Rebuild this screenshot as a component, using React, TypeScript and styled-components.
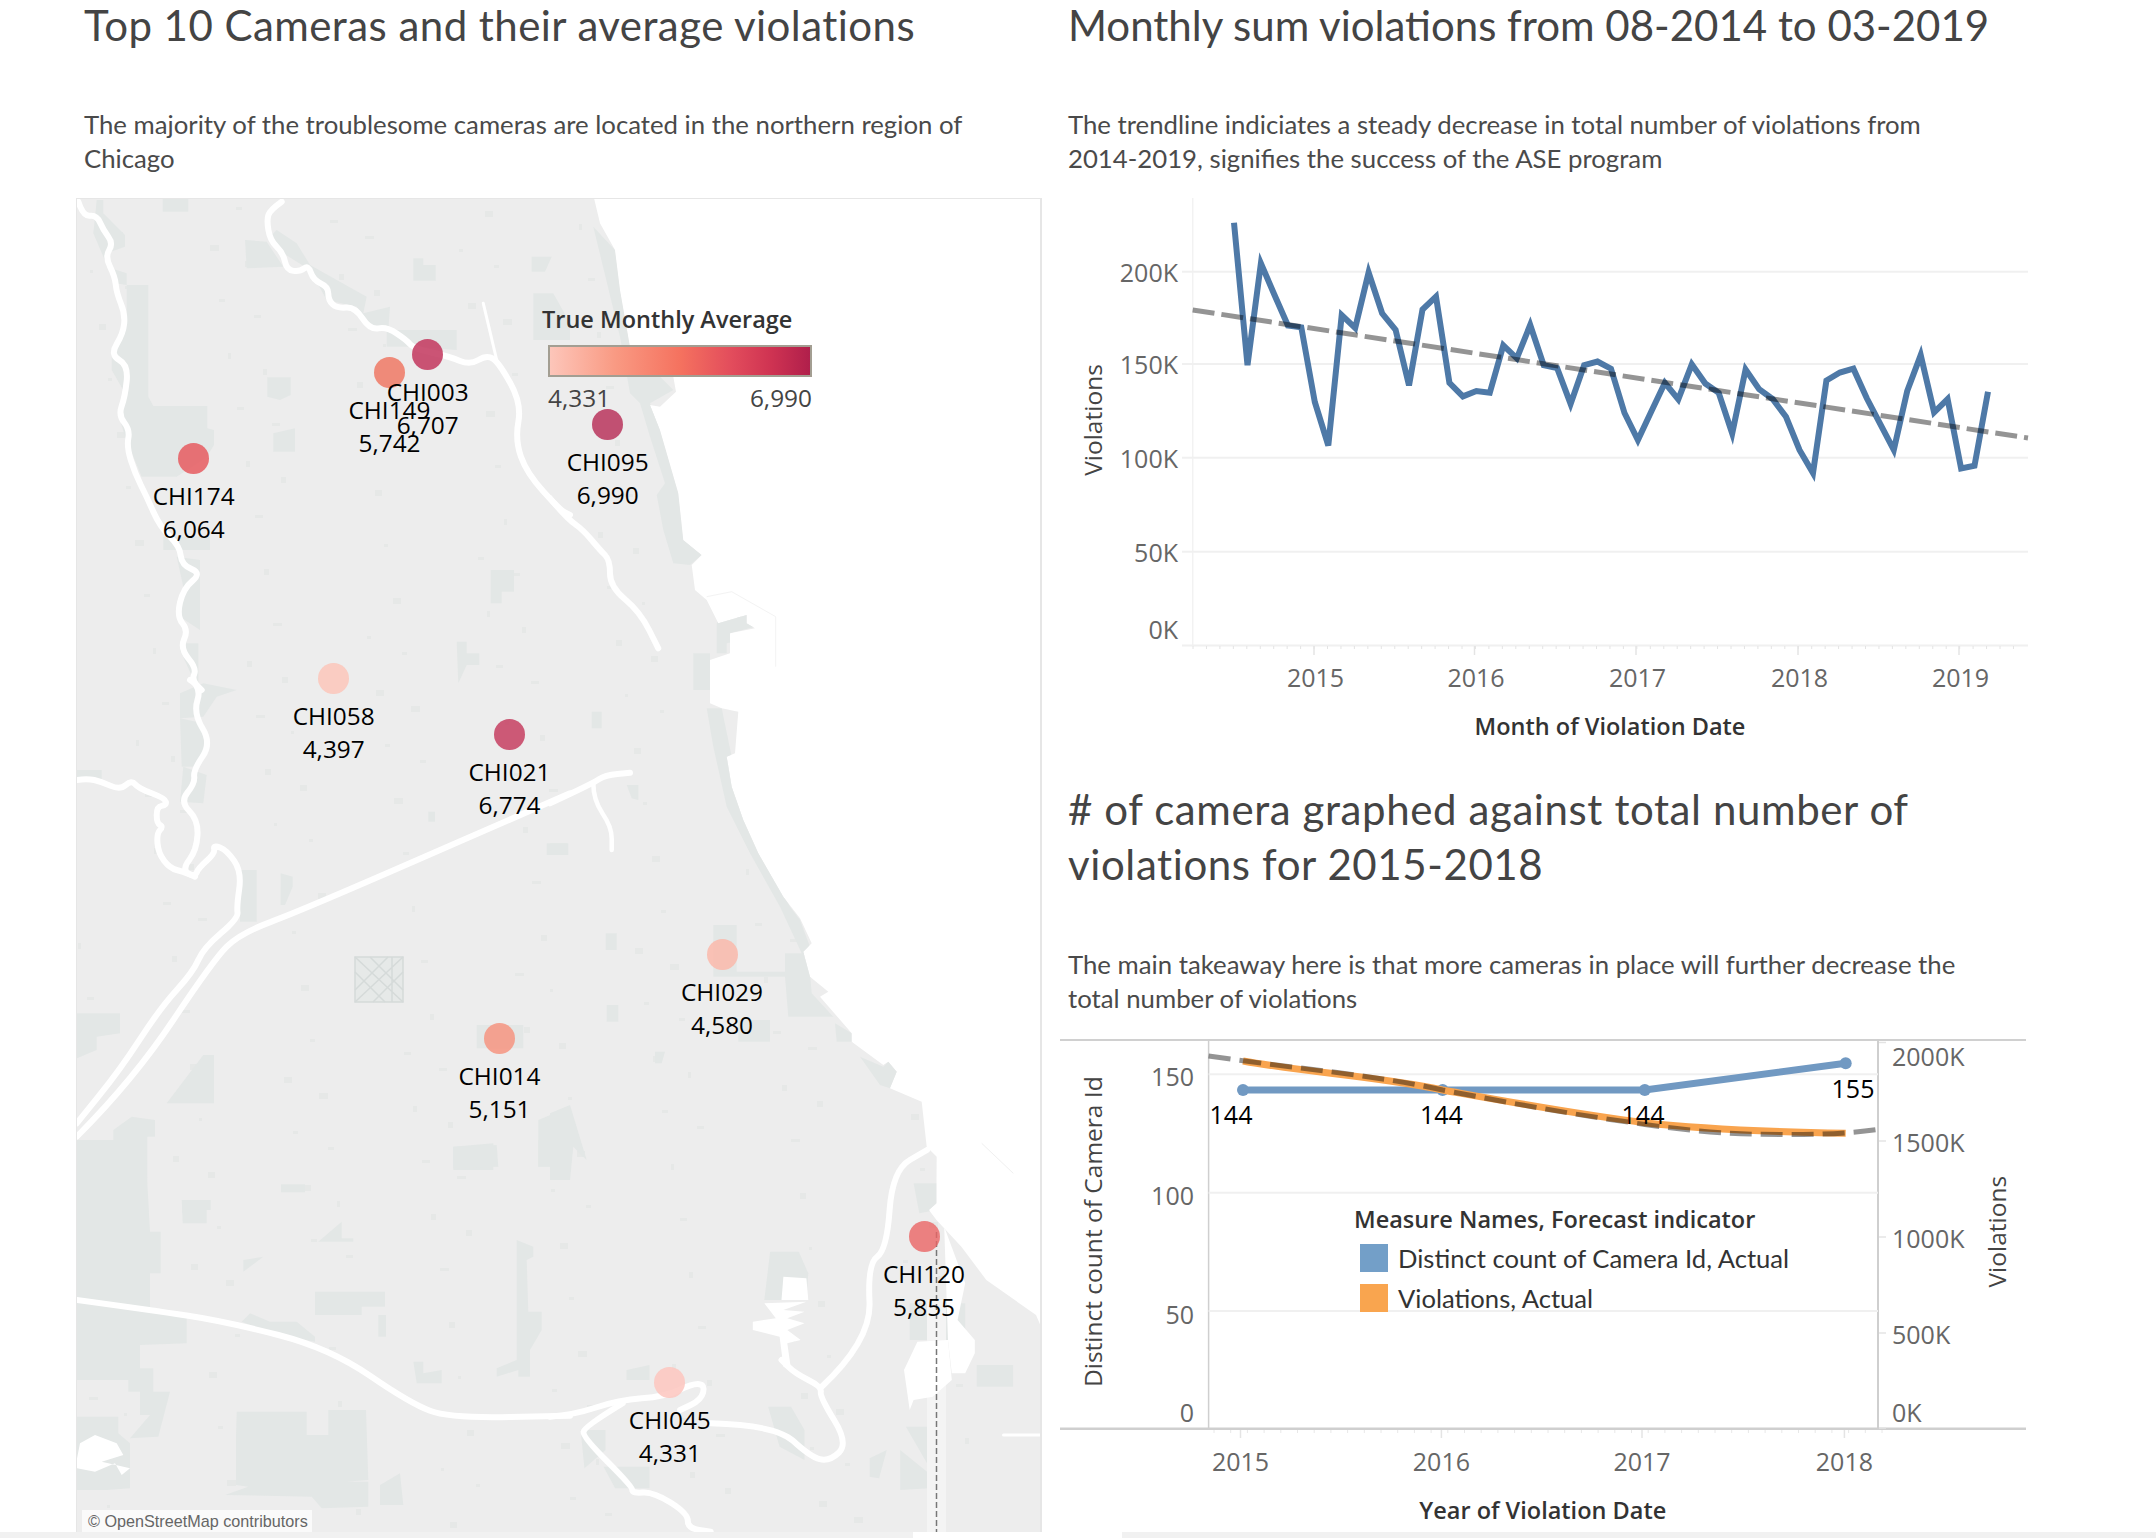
import styled, { createGlobalStyle } from 'styled-components';

const GlobalStyle = createGlobalStyle`
  html, body {
    margin: 0;
    padding: 0;
    background: #fff;
  }
`;

const Page = styled.div`
  width: 2156px;
  height: 1538px;
  overflow: hidden;
  font-family: 'Open Sans', 'Liberation Sans', sans-serif;
  display: flex;
  flex-direction: column;
`;

const Columns = styled.div`
  display: grid;
  grid-template-columns: 966px 980px;
  column-gap: 18px;
  padding-left: 76px;
  height: 1532px;
`;

const Column = styled.section`
  display: flex;
  flex-direction: column;
`;

const Title = styled.h1<{ $top?: number; $bottom?: number; $spacing?: number }>`
  margin: ${(p) => p.$top ?? -2}px 0 ${(p) => p.$bottom ?? 0}px;
  padding-left: 8px;
  font-family: Lato, 'Open Sans', sans-serif;
  font-weight: 400;
  font-size: 42px;
  line-height: 55px;
  letter-spacing: ${(p) => p.$spacing ?? 0}px;
  color: #444;
`;

const Description = styled.p`
  margin: 53.5px 0 23.5px;
  padding-left: 8px;
  font-family: Lato, 'Open Sans', sans-serif;
  font-weight: 400;
  font-size: 25.75px;
  line-height: 34px;
  color: #4a4a4a;
`;

const MapPanel = styled.div`
  position: relative;
  box-sizing: border-box;
  height: 1334px;
  border-top: 1px solid #e6e6e6;
  border-left: 1px solid #e6e6e6;
  border-right: 2px solid #e6e6e6;
  overflow: hidden;
`;

const MapSvg = styled.svg`
  display: block;
  width: 963px;
  height: 1333px;
`;

const PinDot = styled.span<{ $color: string }>`
  position: absolute;
  width: 31px;
  height: 31px;
  margin: -15.5px 0 0 -15.5px;
  border-radius: 50%;
  background: ${(p) => p.$color};
`;

const PinLabel = styled.div`
  position: absolute;
  width: 120px;
  margin-left: -60px;
  font-size: 24.4px;
  line-height: 33px;
  text-align: center;
  color: #000;
`;

const ScaleLegend = styled.div`
  position: absolute;
  left: 471px;
  top: 102.5px;
  width: 264px;
`;

const ScaleTitle = styled.div`
  margin-left: -6px;
  font-size: 23.5px;
  line-height: 34px;
  font-weight: 600;
  white-space: nowrap;
  color: #333;
`;

const ScaleBar = styled.div`
  box-sizing: border-box;
  height: 32px;
  margin-top: 9.5px;
  border: 2px solid #a39e92;
  background: linear-gradient(90deg, #fdc6ba 0%, #f99a83 25%, #f5725f 50%, #e24c5c 70%, #cf3352 85%, #b01f4b 100%);
`;

const ScaleRange = styled.div`
  display: flex;
  justify-content: space-between;
  margin-top: 3px;
  font-size: 24.4px;
  line-height: 35px;
  color: #444;
`;

const Attribution = styled.div`
  position: absolute;
  left: 5px;
  bottom: 0;
  width: 230px;
  height: 22px;
  box-sizing: border-box;
  padding-left: 6px;
  background: rgba(255, 255, 255, 0.7);
  font-family: 'Liberation Sans', Arial, sans-serif;
  font-size: 16.2px;
  line-height: 22px;
  white-space: nowrap;
  color: #666;
`;

const ChartBox = styled.div<{ $height: number }>`
  position: relative;
  height: ${(p) => p.$height}px;
`;

const ChartSvg = styled.svg`
  display: block;
  width: 980px;
  height: 100%;
`;

const AxisLabel = styled.text.attrs({ dy: -2, dominantBaseline: 'central' })<{ $dark?: boolean }>`
  font-family: 'Open Sans', sans-serif;
  font-size: 25px;
  fill: ${(p) => (p.$dark ? '#000' : '#666')};
`;

const AxisTitle = styled.text.attrs({ textAnchor: 'middle', dominantBaseline: 'central' })`
  font-family: 'Open Sans', sans-serif;
  font-size: 24.5px;
  fill: #444;
`;

const FieldTitle = styled.text.attrs({ textAnchor: 'middle', dominantBaseline: 'central' })`
  font-family: 'Open Sans', sans-serif;
  font-size: 23.5px;
  font-weight: 600;
  fill: #333;
`;

const SeriesLegend = styled.div`
  position: absolute;
  left: 294px;
  top: 163px;
  color: #333;
`;

const SeriesTitle = styled.div`
  font-size: 23.5px;
  line-height: 34px;
  font-weight: 600;
  white-space: nowrap;
`;

const SeriesRow = styled.div`
  display: flex;
  align-items: center;
  gap: 10px;
  margin: 8px 0 12px 6px;
  font-family: Lato, 'Open Sans', sans-serif;
  font-size: 25.6px;
  line-height: 28px;
  white-space: nowrap;
`;

const Swatch = styled.span<{ $color: string }>`
  width: 28px;
  height: 28px;
  background: ${(p) => p.$color};
`;

const BottomStrip = styled.div`
  display: grid;
  grid-template-columns: 913px 209px 1fr;
  height: 6px;
`;

const StripPart = styled.div<{ $blank?: boolean }>`
  background: ${(p) => (p.$blank ? '#fff' : '#f1f1f1')};
`;

type Tile = [number, number, number, number?];
const T5: Tile = [70, 190, 3];
const T6: Tile = [550, 190, 3];
const T7: Tile = [70, 680, 3];
const T8: Tile = [550, 680, 3];
const T9: Tile = [70, 1140, 3];
const T10: Tile = [550, 1140, 2.613, 3];

// shapes were traced off crops of the map, each tile has its own origin and scale
const toPage = ([ox, oy, sx, sy]: Tile, s: string) =>
  s.split(' ').map((p) => {
    const [x, y] = p.split(',').map(Number);
    return [+(ox + x / sx).toFixed(1), +(oy + y / (sy ?? sx)).toFixed(1)];
  });

const pts = (tile: Tile, s: string) => toPage(tile, s).map((p) => p.join(',')).join(' ');

// rounds the corners of a traced line
const smooth = (tile: Tile, s: string) => {
  const p = toPage(tile, s);
  let d = `M${p[0][0]} ${p[0][1]}`;
  for (let i = 1; i < p.length - 1; i++) {
    const mx = (p[i][0] + p[i + 1][0]) / 2;
    const my = (p[i][1] + p[i + 1][1]) / 2;
    d += ` Q${p[i][0]} ${p[i][1]} ${mx.toFixed(1)} ${my.toFixed(1)}`;
  }
  const last = p[p.length - 1];
  return `${d} L${last[0]} ${last[1]}`;
};

const coast = [
  '76,198 594,198',
  pts(T6, '150,100 195,180 210,300 240,470 300,550 370,560 378,605 330,650 300,645 330,720 385,910 400,1050 455,1095 425,1125 435,1200 470,1230 505,1300 590,1275 590,1300 615,1315 540,1330 540,1390 480,1410 480,1500'),
  pts(T8, '480,0 480,70 515,85 565,95 555,220 530,230 545,320 580,420 625,520 700,650 750,715 785,790 760,815 780,890 835,935 810,950 905,1060 905,1085 1000,1155 1015,1145 1040,1175 1020,1225 1115,1265 1130,1400 1160,1430 1160,1500'),
  pts(T10, '1010,40 1010,190 990,210 1010,240 1075,320 1140,420 1270,525 1283,560'),
  '1042,1532 76,1532',
].join(' ');

const parks: [Tile, string][] = [
  [T5, '170,285 235,285 235,620 250,648 412,648 412,715 432,720 432,765 410,800 320,860 215,860 165,740 145,670 165,610 125,540 125,495 165,430 170,370'],
  [T5, '80,30 100,30 100,70 165,135 165,170 110,190 110,230 170,250 170,285 135,280 100,200 70,130'],
  [T5, '525,150 590,155 640,230 530,235'],
  [T5, '620,120 680,160 720,225 890,320 880,370 960,350 955,420 1160,420 1160,480 1030,470 950,470 950,410 900,420 860,350 770,330 720,240 640,190 600,140'],
  [T5, '278,25 355,25 355,65 278,65'],
  [T5, '1030,205 1060,205 1060,225 1097,225 1097,272 1030,272'],
  [T5, '1385,200 1445,200 1425,245 1385,245'],
  [T5, '592,562 662,562 662,615 630,630 592,620'],
  [T5, '610,730 675,715 675,785 610,785'],
  [T5, '1262,1140 1332,1140 1332,1205 1295,1205 1295,1240 1262,1240'],
  [T5, '1160,1355 1190,1355 1190,1390 1228,1390 1228,1425 1190,1425 1165,1480'],
  [T5, '320,1100 390,1110 390,1320 330,1280 340,1190'],
  [T5, '280,1040 420,1040 420,1080 280,1080'],
  [T5, '1390,310 1450,310 1500,400 1500,450 1390,450'],
  [T5, '335,1360 385,1360 385,1500 330,1380'],
  [T6, '130,110 195,180 210,300 240,470 370,600 300,640 330,720 385,910 400,1050 455,1095 420,1125 370,1120 340,1020 320,915 345,880 300,740 270,640 240,610 210,440'],
  [T6, '430,1390 480,1390 480,1500 430,1500'],
  [T6, '530,1270 590,1270 590,1300 615,1310 540,1330 590,1350 530,1360 530,1390 500,1390 500,1300'],
  [T7, '330,40 400,10 500,30 440,50 400,110 330,115'],
  [T7, '330,115 400,130 420,190 375,260 335,260'],
  [T7, '340,260 410,285 400,370 330,365'],
  [T7, '20,270 95,270 95,300 20,300'],
  [T7, '510,570 560,570 560,725 510,725'],
  [T7, '632,580 668,590 668,620 645,675 632,675'],
  [T7, '20,1000 150,1000 150,1060 80,1070 80,1110 20,1135'],
  [T7, '290,1270 400,1125 432,1125 432,1270'],
  [T7, '20,1420 130,1420 130,1350 185,1310 255,1320 255,1370 232,1370 232,1500 20,1500'],
  [T7, '1220,1035 1360,1035 1360,1105 1220,1105'],
  [T7, '1405,1320 1500,1280 1500,1460 1405,1460'],
  [T7, '1150,1400 1270,1390 1270,1470 1150,1470'],
  [T7, '1075,395 1095,395 1095,425 1075,425'],
  [T7, '1430,490 1495,490 1495,525 1430,525'],
  [T8, '490,735 560,735 560,875 705,875 705,820 775,820 785,940 850,1010 715,1010 705,890 490,890'],
  [T8, '470,85 515,85 545,230 640,540 720,680 750,720 780,800 760,830 690,680 600,520 530,380 490,200'],
  [T8, '565,1020 660,1020 660,1085 565,1085'],
  [T8, '0,490 52,490 52,525 0,525'],
  [T8, '0,1300 60,1275 110,1440 70,1400 60,1500 0,1500'],
  [T8, '167,760 200,760 200,810 167,810'],
  [T8, '170,975 205,975 205,1025 170,1025'],
  [T8, '230,315 265,315 265,360 245,355'],
  [T8, '125,95 155,95 155,145 125,145'],
  [T8, '315,1115 345,1115 335,1150 315,1150'],
  [T8, '855,1030 905,1060 905,1085 860,1085'],
  [T8, '930,1130 1000,1160 1020,1140 1045,1175 1020,1225 990,1215'],
  [T9, '20,0 225,0 240,275 272,275 272,400 240,400 240,500 350,530 350,610 210,615 210,685 250,685 250,755 300,755 265,890 180,895 240,825 210,825 210,755 175,755 175,720 20,720'],
  [T9, '20,830 145,830 145,880 180,910 180,1045 110,1050 20,1050'],
  [T9, '335,180 422,180 422,210 410,210 410,250 338,250'],
  [T9, '500,815 710,815 710,885 775,885 775,810 888,810 895,1020 830,1025 895,1025 895,1100 755,1105 725,1070 465,1065 535,1040 498,1035 498,890'],
  [T9, '735,455 945,455 945,500 875,500 875,525 735,525'],
  [T9, '515,545 540,520 600,545 680,545 735,590 735,605 620,585'],
  [T9, '745,305 815,245 815,295 850,295 850,305'],
  [T9, '1340,300 1390,320 1390,350 1370,360 1375,515 1415,515 1415,570 1380,630 1380,710 1345,710 1345,690 1280,710 1280,685 1340,660'],
  [T9, '1150,20 1280,15 1285,80 1150,85'],
  [T9, '930,1035 990,1000 1000,1095 930,1095'],
  [T9, '520,360 580,350 520,395'],
  [T9, '1030,665 1060,665 1060,700 1115,690 1115,730 1040,730'],
  [T9, '633,133 705,133 705,157 633,157'],
  [T9, '925,525 948,525 948,590 925,590'],
  [T9, '1405,0 1500,0 1500,60 1440,60 1440,80 1405,80'],
  [T10, '575,335 650,335 675,400 670,480 560,480'],
  [T10, '950,130 1010,130 1010,210 965,220'],
  [T10, '570,800 630,800 665,870 665,960 600,920'],
  [T10, '200,690 260,675 260,720 200,720'],
  [T10, '80,870 145,870 145,930 90,985'],
  [T10, '140,980 260,980 260,1045 170,1045'],
  [T10, '915,930 990,1000 990,1045 915,1050'],
  [T10, '930,860 985,860 985,970'],
  [T10, '1115,675 1210,675 1210,740 1115,740'],
  [T10, '835,955 880,930 860,1015 835,1010'],
  [T10, '940,490 1085,490 1085,600 940,600'],
];

const lakes: [Tile, string][] = [
  [T10, '610,410 670,415 675,480 605,480'],
  [T10, '560,490 670,485 610,510 665,515 620,535 665,550 620,570 655,600 620,610 630,690 610,680 600,590 530,570 530,545 590,535'],
  [T10, '960,605 1040,600 1050,720 1000,770 950,780 940,810 925,690'],
  [T10, '1030,260 1085,430 1065,540 1110,600 1110,640 1085,700 1050,700 1040,600'],
  [T9, '20,960 30,910 75,885 140,910 160,945 95,965 180,985 155,1005 135,970 75,995 20,985'],
];

const rivers: [Tile, string, number][] = [
  [T5, '25,35 40,80 80,75 100,120 130,160 105,200 135,260 140,310 165,370 160,430 120,495 175,525 165,620 145,675 180,720 170,770 195,850 230,920 270,1010 330,1070 335,1125 395,1150 340,1195 320,1280 355,1320 330,1375 380,1435 365,1470 395,1500', 6],
  [T7, '360,0 395,20 370,100 425,190 370,270 375,310 330,365 385,420 380,510 335,570 375,590', 6],
  [T7, '20,300 50,295 95,305 150,330 185,300 205,325 285,355 290,375 260,380 260,430 280,440 260,460 265,520 300,565 340,575 375,590 385,565 435,520 430,495 470,510 515,575 500,680 505,715 400,805 370,875 270,985 150,1170 20,1330', 6],
  [T7, '20,1370 190,1200 430,840 510,760 700,690 1500,340', 6],
  [T8, '0,370 130,310 165,285 240,278', 6],
  [T8, '130,310 130,360 185,440 185,510', 4.5],
  [T5, '635,35 600,60 590,90 600,150 640,190 650,240 690,245 715,225 730,270 775,290 775,330 800,355 855,350 900,420 950,410 1010,450 1030,475 1140,500 1200,525 1250,495 1285,515 1355,640 1335,750 1370,850 1470,960 1500,975', 6],
  [T6, '0,925 50,985 100,1020 150,1080 180,1110 180,1190 270,1265 325,1375', 6],
  [T5, '1240,340 1280,510', 3],
  [T9, '20,480 240,510 470,545 780,625 1020,790 1140,835 1500,827', 6],
  [T10, '0,830 60,825 180,780 300,770 375,730 405,735 395,780 340,810', 6],
  [T10, '190,790 90,860 85,890 215,1040 215,1060 270,1055 360,1120 360,1165 420,1175', 6],
  [T10, '420,850 590,855 680,950 730,965 780,910 705,770 710,740 640,700 605,660', 6],
  [T10, '710,740 840,600 830,370 880,330 895,90 985,30', 6],
  [T10, '1185,885 1283,885', 3],
];

const specks = Array.from({ length: 320 }, (_, i) => {
  const a = (i * 7919 + 13) % 961;
  const b = (i * 104729 + 71) % 1327;
  return { x: 77 + a, y: 199 + b, w: 3 + (i % 7), h: 3 + ((i * 3) % 6) };
});

const pins = [
  { id: 'CHI149', value: '5,742', x: 389.5, y: 372.4, color: 'rgba(238,120,100,0.85)' },
  { id: 'CHI003', value: '6,707', x: 427.7, y: 354.4, color: 'rgba(196,60,98,0.88)' },
  { id: 'CHI095', value: '6,990', x: 607.7, y: 424.7, color: 'rgba(184,52,92,0.85)' },
  { id: 'CHI174', value: '6,064', x: 193.7, y: 458.4, color: 'rgba(230,90,95,0.85)' },
  { id: 'CHI058', value: '4,397', x: 333.7, y: 678.4, color: 'rgba(252,198,186,0.85)' },
  { id: 'CHI021', value: '6,774', x: 509.5, y: 734.4, color: 'rgba(198,62,96,0.85)' },
  { id: 'CHI029', value: '4,580', x: 722, y: 954.7, color: 'rgba(250,184,170,0.85)' },
  { id: 'CHI014', value: '5,151', x: 499.5, y: 1038.4, color: 'rgba(246,148,128,0.85)' },
  { id: 'CHI120', value: '5,855', x: 924, y: 1236.4, color: 'rgba(234,100,100,0.8)' },
  { id: 'CHI045', value: '4,331', x: 669.8, y: 1382.4, color: 'rgba(253,198,190,0.85)' },
];

const monthly = [
  226.3, 150, 204.5, 187.7, 171.3, 170.3, 130.3, 107, 176.8, 169.9, 199.6, 177.8, 168.9, 139.2,
  179.8, 186.7, 140.6, 133.3, 136.2, 135.2, 160.6, 153.7, 171.5, 150, 148.5, 129.3, 150, 152,
  148.1, 124.4, 109.9, 125.3, 140.6, 131.7, 150.5, 140.2, 135.2, 113.5, 147.7, 137.2, 131.9, 122.4,
  104.6, 92.3, 141.8, 146.1, 148.1, 132.3, 118.4, 104.6, 136.2, 155.4, 124.8, 131.9, 94.7, 96.2, 135.8,
];
const monthX = (i: number) => 1234 + (i * 754) / (monthly.length - 1);
const monthY = (v: number) => 645.4 - v * 1.868;

const grid1 = [
  { label: '200K', y: 271.7, ty: 274 },
  { label: '150K', y: 363.9, ty: 366 },
  { label: '100K', y: 457.8, ty: 460 },
  { label: '50K', y: 551.8, ty: 554 },
  { label: '0K', y: 645.4, ty: 630.5 },
];
const years1 = [
  { label: '2015', x: 1314 },
  { label: '2016', x: 1474.5 },
  { label: '2017', x: 1636 },
  { label: '2018', x: 1798 },
  { label: '2019', x: 1959 },
];

const grid2 = [
  { label: '150', y: 1073.3, ty: 1077 },
  { label: '100', y: 1191.7, ty: 1196 },
  { label: '50', y: 1310, ty: 1314.7 },
];
const right2 = [
  { label: '2000K', y: 1041.5, ty: 1057 },
  { label: '1500K', y: 1140, ty: 1142.7 },
  { label: '1000K', y: 1236, ty: 1239 },
  { label: '500K', y: 1332, ty: 1335 },
  { label: '0K', y: 1427, ty: 1412.7 },
];
const years2 = [
  { label: '2015', x: 1240.5 },
  { label: '2016', x: 1441.4 },
  { label: '2017', x: 1642 },
  { label: '2018', x: 1844.4 },
];
const bluePts = [
  [1243, 1089],
  [1442.6, 1089],
  [1644.8, 1089],
  [1845.7, 1062.3],
];
const dataLabels = [
  { label: '144', x: 1231, y: 1115.3 },
  { label: '144', x: 1441.4, y: 1115.3 },
  { label: '144', x: 1643, y: 1115.3 },
  { label: '155', x: 1853, y: 1089.3 },
];

const MapView = () => (
  <MapPanel>
    <MapSvg viewBox="77 199 963 1333">
      <defs>
        <clipPath id="land">
          <polygon points={coast} />
        </clipPath>
      </defs>
      <polygon points={coast} fill="#ededed" />
      <g clipPath="url(#land)">
        {specks.map((s, i) => (
          <rect key={i} x={s.x} y={s.y} width={s.w} height={s.h} fill="#e6e8e7" />
        ))}
        {parks.map(([tile, s], i) => (
          <polygon key={i} points={pts(tile, s)} fill="#e3e7e6" />
        ))}
        <rect x="927" y="1300" width="19" height="232" fill="#f4f4f4" />
        {lakes.map(([tile, s], i) => (
          <polygon key={i} points={pts(tile, s)} fill="#fff" />
        ))}
      </g>
      <g stroke="#d5dad9" strokeWidth="1.5" fill="#e6e9e8">
        <rect x="355" y="957" width="48" height="45" />
        <path d="M355 957 L403 1002 M403 957 L355 1002 M370 957 L403 990 M388 957 L355 990 M355 972 L385 1002 M403 972 L373 1002 M392 957 V1002" fill="none" />
      </g>
      <polyline points={pts(T6, '470,1220 545,1205 677,1280 677,1430')} fill="none" stroke="#f3f3f3" strokeWidth="1" />
      <polyline points={pts(T8, '1295,1390 1390,1480')} fill="none" stroke="#f0f0f0" strokeWidth="1" />
      {rivers.map(([tile, s, w], i) => (
        <path
          key={i}
          d={smooth(tile, s)}
          fill="none"
          stroke="#fff"
          strokeWidth={w}
          strokeLinejoin="round"
          strokeLinecap="round"
        />
      ))}
      <line x1="936.5" y1="1232" x2="936.5" y2="1532" stroke="#777" strokeWidth="1.5" strokeDasharray="6 3" />
    </MapSvg>
    {pins.map((p) => (
      <PinDot key={p.id} $color={p.color} style={{ left: p.x - 77, top: p.y - 199 }} />
    ))}
    {pins.map((p) => (
      <PinLabel key={p.id} style={{ left: p.x - 77, top: p.y - 199 + 20.5 }}>
        {p.id}
        <br />
        {p.value}
      </PinLabel>
    ))}
    <ScaleLegend>
      <ScaleTitle>True Monthly Average</ScaleTitle>
      <ScaleBar />
      <ScaleRange>
        <span>4,331</span>
        <span>6,990</span>
      </ScaleRange>
    </ScaleLegend>
    <Attribution>© OpenStreetMap contributors</Attribution>
  </MapPanel>
);

const MonthlyChart = () => (
  <ChartBox $height={562}>
    <ChartSvg viewBox="1060 198 980 562">
      <line x1="1192.7" y1="198" x2="1192.7" y2="645" stroke="#f2f2f2" strokeWidth="1.5" />
      {grid1.map((g) => (
        <g key={g.label}>
          <line x1="1182" y1={g.y} x2="2028" y2={g.y} stroke="#f0f0f0" strokeWidth="2" />
          <AxisLabel x="1178" y={g.ty} textAnchor="end">
            {g.label}
          </AxisLabel>
        </g>
      ))}
      {Array.from({ length: 62 }, (_, i) => (
        <line key={i} x1={1193 + i * 13.45} y1="646" x2={1193 + i * 13.45} y2="649" stroke="#e4e4e4" strokeWidth="1" />
      ))}
      {years1.map((y) => (
        <g key={y.label}>
          <line x1={y.x} y1="646" x2={y.x} y2="655" stroke="#e4e4e4" strokeWidth="1.5" />
          <AxisLabel x={y.x + 1.5} y="679" textAnchor="middle">
            {y.label}
          </AxisLabel>
        </g>
      ))}
      <polyline
        points={monthly.map((v, i) => `${monthX(i).toFixed(1)},${monthY(v).toFixed(1)}`).join(' ')}
        fill="none"
        stroke="#4e79a7"
        strokeWidth="6"
        strokeLinejoin="miter"
      />
      <line x1="1192.7" y1="310" x2="2028" y2="438" stroke="#000" strokeOpacity="0.42" strokeWidth="5" strokeDasharray="22 7" />
      <AxisTitle transform="translate(1092 420) rotate(-90)">Violations</AxisTitle>
      <FieldTitle x="1610" y="725.7">
        Month of Violation Date
      </FieldTitle>
    </ChartSvg>
  </ChartBox>
);

const YearlyChart = () => (
  <ChartBox $height={494}>
    <ChartSvg viewBox="1060 1038 980 494">
      <line x1="1060" y1="1039" x2="2026" y2="1039" stroke="#d0d0d0" strokeWidth="2" />
      <line x1="1060" y1="1427.7" x2="2026" y2="1427.7" stroke="#cfcfcf" strokeWidth="2.5" />
      <line x1="1208.6" y1="1038" x2="1208.6" y2="1427" stroke="#cfcfcf" strokeWidth="1.5" />
      <line x1="1878" y1="1038" x2="1878" y2="1427" stroke="#cfcfcf" strokeWidth="2" />
      {grid2.map((g) => (
        <g key={g.label}>
          <line x1="1208.6" y1={g.y} x2="1878" y2={g.y} stroke="#f0f0f0" strokeWidth="2" />
          <AxisLabel x="1194" y={g.ty} textAnchor="end">
            {g.label}
          </AxisLabel>
        </g>
      ))}
      <AxisLabel x="1194" y="1412.7" textAnchor="end">
        0
      </AxisLabel>
      {right2.map((g) => (
        <g key={g.label}>
          <line x1="1879" y1={g.y} x2="1886" y2={g.y} stroke="#e4e4e4" strokeWidth="1.5" />
          <AxisLabel x="1892" y={g.ty}>
            {g.label}
          </AxisLabel>
        </g>
      ))}
      {Array.from({ length: 41 }, (_, i) => (
        <line key={i} x1={1214 + i * 16.7} y1="1429" x2={1214 + i * 16.7} y2="1432" stroke="#e8e8e8" strokeWidth="1" />
      ))}
      {years2.map((y) => (
        <g key={y.label}>
          <line x1={y.x} y1="1429" x2={y.x} y2="1437" stroke="#e4e4e4" strokeWidth="1.5" />
          <AxisLabel x={y.x} y="1461.5" textAnchor="middle">
            {y.label}
          </AxisLabel>
        </g>
      ))}
      <polyline points={bluePts.map((p) => p.join(',')).join(' ')} fill="none" stroke="#7199c2" strokeWidth="7" />
      {bluePts.map((p) => (
        <circle key={p[0]} cx={p[0]} cy={p[1]} r="6" fill="#7199c2" />
      ))}
      <path
        d="M1243 1060 C1310 1072 1375 1075 1442.6 1089 C1510 1101 1575 1113 1644.8 1121.7 C1710 1129 1780 1131 1845.7 1132.3"
        fill="none"
        stroke="#f9a44e"
        strokeWidth="7"
      />
      <path
        d="M1208.6 1055 C1290 1067 1370 1073 1442.6 1089 C1510 1102 1575 1114 1644.8 1123.4 C1690 1130 1730 1133 1761.5 1133.3 C1800 1133.8 1840 1134 1878 1128.4"
        fill="none"
        stroke="#000"
        strokeOpacity="0.42"
        strokeWidth="5"
        strokeDasharray="22 9"
      />
      {dataLabels.map((d) => (
        <AxisLabel key={d.x} $dark x={d.x} y={d.y} textAnchor="middle">
          {d.label}
        </AxisLabel>
      ))}
      <AxisTitle transform="translate(1092 1230.7) rotate(-90)">Distinct count of Camera Id</AxisTitle>
      <AxisTitle transform="translate(1996 1230.7) rotate(-90)">Violations</AxisTitle>
      <FieldTitle x="1542.8" y="1509">
        Year of Violation Date
      </FieldTitle>
    </ChartSvg>
    <SeriesLegend>
      <SeriesTitle>Measure Names, Forecast indicator</SeriesTitle>
      <SeriesRow>
        <Swatch $color="#739fc8" />
        Distinct count of Camera Id, Actual
      </SeriesRow>
      <SeriesRow>
        <Swatch $color="#f9a54f" />
        Violations, Actual
      </SeriesRow>
    </SeriesLegend>
  </ChartBox>
);

export default function App() {
  return (
    <Page>
      <GlobalStyle />
      <Columns>
        <Column>
          <Title $spacing={0.45}>Top 10 Cameras and their average violations</Title>
          <Description>
            The majority of the troublesome cameras are located in the northern region of
            <br />
            Chicago
          </Description>
          <MapView />
        </Column>
        <Column>
          <Title>Monthly sum violations from 08-2014 to 03-2019</Title>
          <Description>
            The trendline indiciates a steady decrease in total number of violations from
            <br />
            2014-2019, signifies the success of the ASE program
          </Description>
          <MonthlyChart />
          <Title $top={21.75} $bottom={1.75} $spacing={0.6}>
            # of camera graphed against total number of
            <br />
            violations for 2015-2018
          </Title>
          <Description>
            The main takeaway here is that more cameras in place will further decrease the
            <br />
            total number of violations
          </Description>
          <YearlyChart />
        </Column>
      </Columns>
      <BottomStrip>
        <StripPart />
        <StripPart $blank />
        <StripPart />
      </BottomStrip>
    </Page>
  );
}
